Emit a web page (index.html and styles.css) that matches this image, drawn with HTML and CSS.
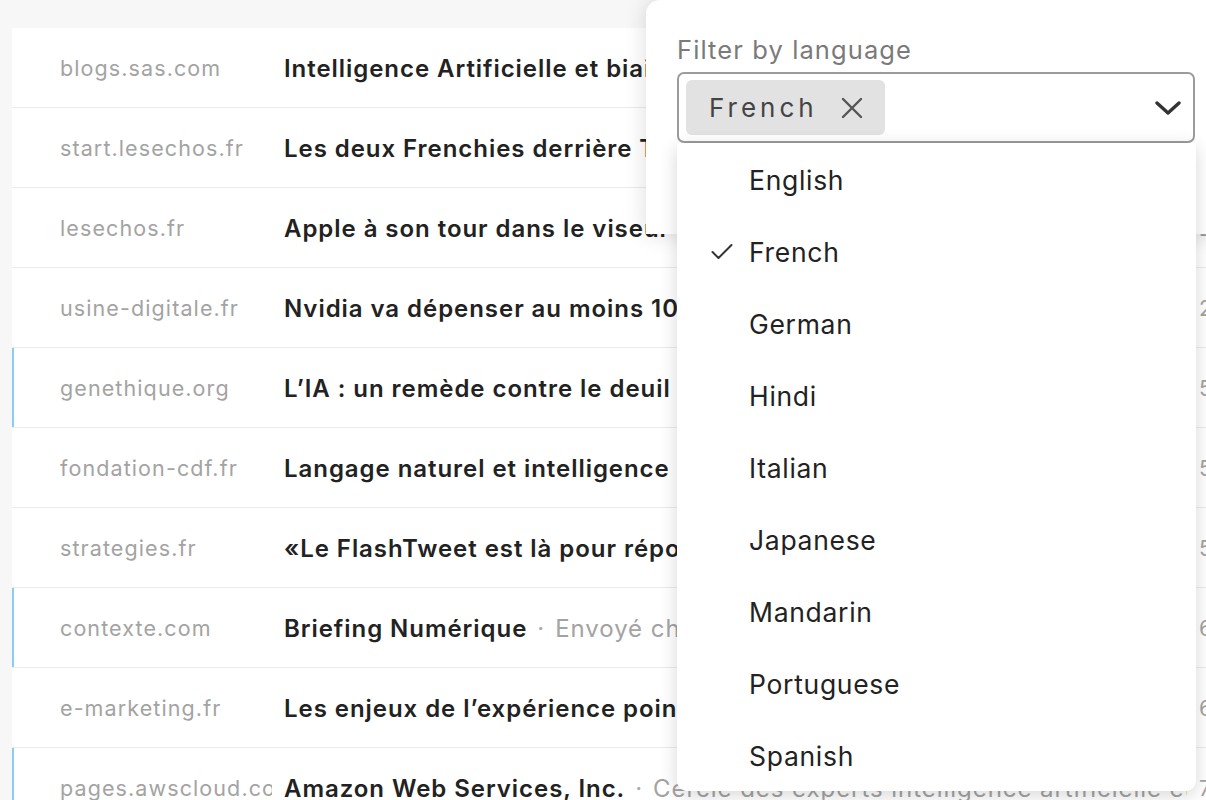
FILE: index.html
```html
<!DOCTYPE html>
<html lang="fr">
<head>
<meta charset="utf-8">
<title>Articles</title>
<link rel="stylesheet" href="styles.css">
</head>
<body>
<main class="page">
  <section class="list">
    <div class="row"><span class="domain">blogs.sas.com</span><span class="title"><b>Intelligence Artificielle et biais : comment les éviter</b></span><span class="date">2 mars</span></div>
    <div class="row"><span class="domain">start.lesechos.fr</span><span class="title"><b>Les deux Frenchies derrière Tilt, la plateforme</b></span><span class="date">2 mars</span></div>
    <div class="row"><span class="domain">lesechos.fr</span><span class="title"><b>Apple à son tour dans le viseur de Bruxelles</b></span><span class="date">2 mars</span></div>
    <div class="row"><span class="domain">usine-digitale.fr</span><span class="title"><b>Nvidia va dépenser au moins 10 milliards</b></span><span class="date">2 mars</span></div>
    <div class="row unread"><span class="domain">genethique.org</span><span class="title"><b>L’IA : un remède contre le deuil ?</b></span><span class="date">5 mars</span></div>
    <div class="row"><span class="domain">fondation-cdf.fr</span><span class="title"><b>Langage naturel et intelligence artificielle</b></span><span class="date">5 mars</span></div>
    <div class="row"><span class="domain">strategies.fr</span><span class="title"><b>«Le FlashTweet est là pour répondre</b></span><span class="date">5 mars</span></div>
    <div class="row unread"><span class="domain">contexte.com</span><span class="title"><b>Briefing Numérique</b><span class="sep">·</span><span class="sub">Envoyé chaque matin</span></span><span class="date">6 mars</span></div>
    <div class="row"><span class="domain">e-marketing.fr</span><span class="title"><b>Les enjeux de l’expérience point de vente</b></span><span class="date">6 mars</span></div>
    <div class="row unread"><span class="domain">pages.awscloud.com</span><span class="title"><b>Amazon Web Services, Inc.</b><span class="sep">·</span><span class="sub">Cercle des experts intelligence artificielle et machine learning</span></span><span class="date">7 mars</span></div>
  </section>

  <aside class="panel">
    <label class="label">Filter by language</label>
    <div class="select">
      <span class="chip">French
        <svg class="chip-x" width="22" height="22" viewBox="0 0 22 22"><path d="M2 2 L20 20 M20 2 L2 20" stroke="#555" stroke-width="2.4" fill="none" stroke-linecap="round"/></svg>
      </span>
      <svg class="chevron" width="26" height="16" viewBox="0 0 26 16"><path d="M2 3 L13 13 L24 3" stroke="#333" stroke-width="3.4" fill="none" stroke-linecap="round" stroke-linejoin="round"/></svg>
    </div>
  </aside>

  <ul class="menu">
    <li class="opt">English</li>
    <li class="opt selected"><svg class="check" width="22" height="18" viewBox="0 0 22 18"><path d="M1.5 9 L7.5 15 L20.5 2" stroke="#333" stroke-width="2" fill="none" stroke-linecap="round" stroke-linejoin="round"/></svg>French</li>
    <li class="opt">German</li>
    <li class="opt">Hindi</li>
    <li class="opt">Italian</li>
    <li class="opt">Japanese</li>
    <li class="opt">Mandarin</li>
    <li class="opt">Portuguese</li>
    <li class="opt">Spanish</li>
  </ul>
</main>
</body>
</html>
```

FILE: styles.css
```css
html, body {
  margin: 0;
  padding: 0;
}
body {
  width: 1206px;
  height: 800px;
  overflow: hidden;
  background: #f7f7f7;
  font-family: Inter, "Noto Sans", "Liberation Sans", sans-serif;
  color: #222;
}
.page {
  position: relative;
  width: 1206px;
  height: 800px;
  overflow: hidden;
  padding: 28px 0 0 12px;
  box-sizing: border-box;
}
.list {
  width: 1400px;
  background: #fff;
}
.row {
  display: grid;
  grid-template-columns: 212px 903px auto;
  column-gap: 12px;
  align-items: center;
  height: 79px;
  padding-left: 48px;
  border-bottom: 1px solid #ebebeb;
  box-sizing: content-box;
  position: relative;
}
.row.unread {
  box-shadow: inset 2px 0 0 #8ccbf3;
}
.domain {
  font-size: 21.5px;
  letter-spacing: 1.1px;
  color: #a3a3a3;
  white-space: nowrap;
  overflow: hidden;
}
.title {
  font-size: 24px;
  letter-spacing: 0.95px;
  white-space: nowrap;
  overflow: hidden;
  padding-top: 2px;
}
.title b {
  font-weight: 600;
  color: #222;
}
.sep {
  color: #aaa;
  margin: 0 10px;
}
.sub {
  color: #a3a3a3;
}
.date {
  font-size: 21.5px;
  color: #a3a3a3;
  white-space: nowrap;
}

.panel {
  position: absolute;
  top: 0;
  left: 646px;
  width: 600px;
  height: 234px;
  background: #fff;
  border-top-left-radius: 14px;
  box-shadow: 0 0 22px rgba(0, 0, 0, 0.14);
  box-sizing: border-box;
  padding: 32px 0 0 31px;
}
.label {
  display: block;
  font-size: 25.5px;
  letter-spacing: 1.1px;
  color: #7a7a7a;
  line-height: 36px;
  margin-bottom: 4px;
}
.select {
  width: 518px;
  height: 71px;
  box-sizing: border-box;
  border: 2px solid #9c9c9c;
  border-radius: 7px;
  display: flex;
  align-items: center;
  justify-content: space-between;
  padding: 0 12px 0 7px;
}
.chip {
  display: flex;
  align-items: center;
  gap: 23px;
  height: 55px;
  padding: 0 22px 0 23px;
  background: #e2e2e2;
  border-radius: 6px;
  font-size: 26px;
  letter-spacing: 4px;
  color: #444;
}
.chip-x {
  display: block;
}
.chevron {
  display: block;
}

.menu {
  position: absolute;
  top: 143px;
  left: 677px;
  width: 519px;
  margin: 0;
  padding: 0;
  list-style: none;
  background: #fff;
  border-radius: 0 0 10px 10px;
  box-shadow: 0 4px 18px rgba(0, 0, 0, 0.16);
}
.opt {
  position: relative;
  height: 72px;
  box-sizing: border-box;
  padding-top: 2px;
  display: flex;
  align-items: center;
  padding-left: 72px;
  font-size: 26.5px;
  letter-spacing: 0.7px;
  color: #222;
}
.check {
  position: absolute;
  left: 34px;
  top: 28px;
}
```
